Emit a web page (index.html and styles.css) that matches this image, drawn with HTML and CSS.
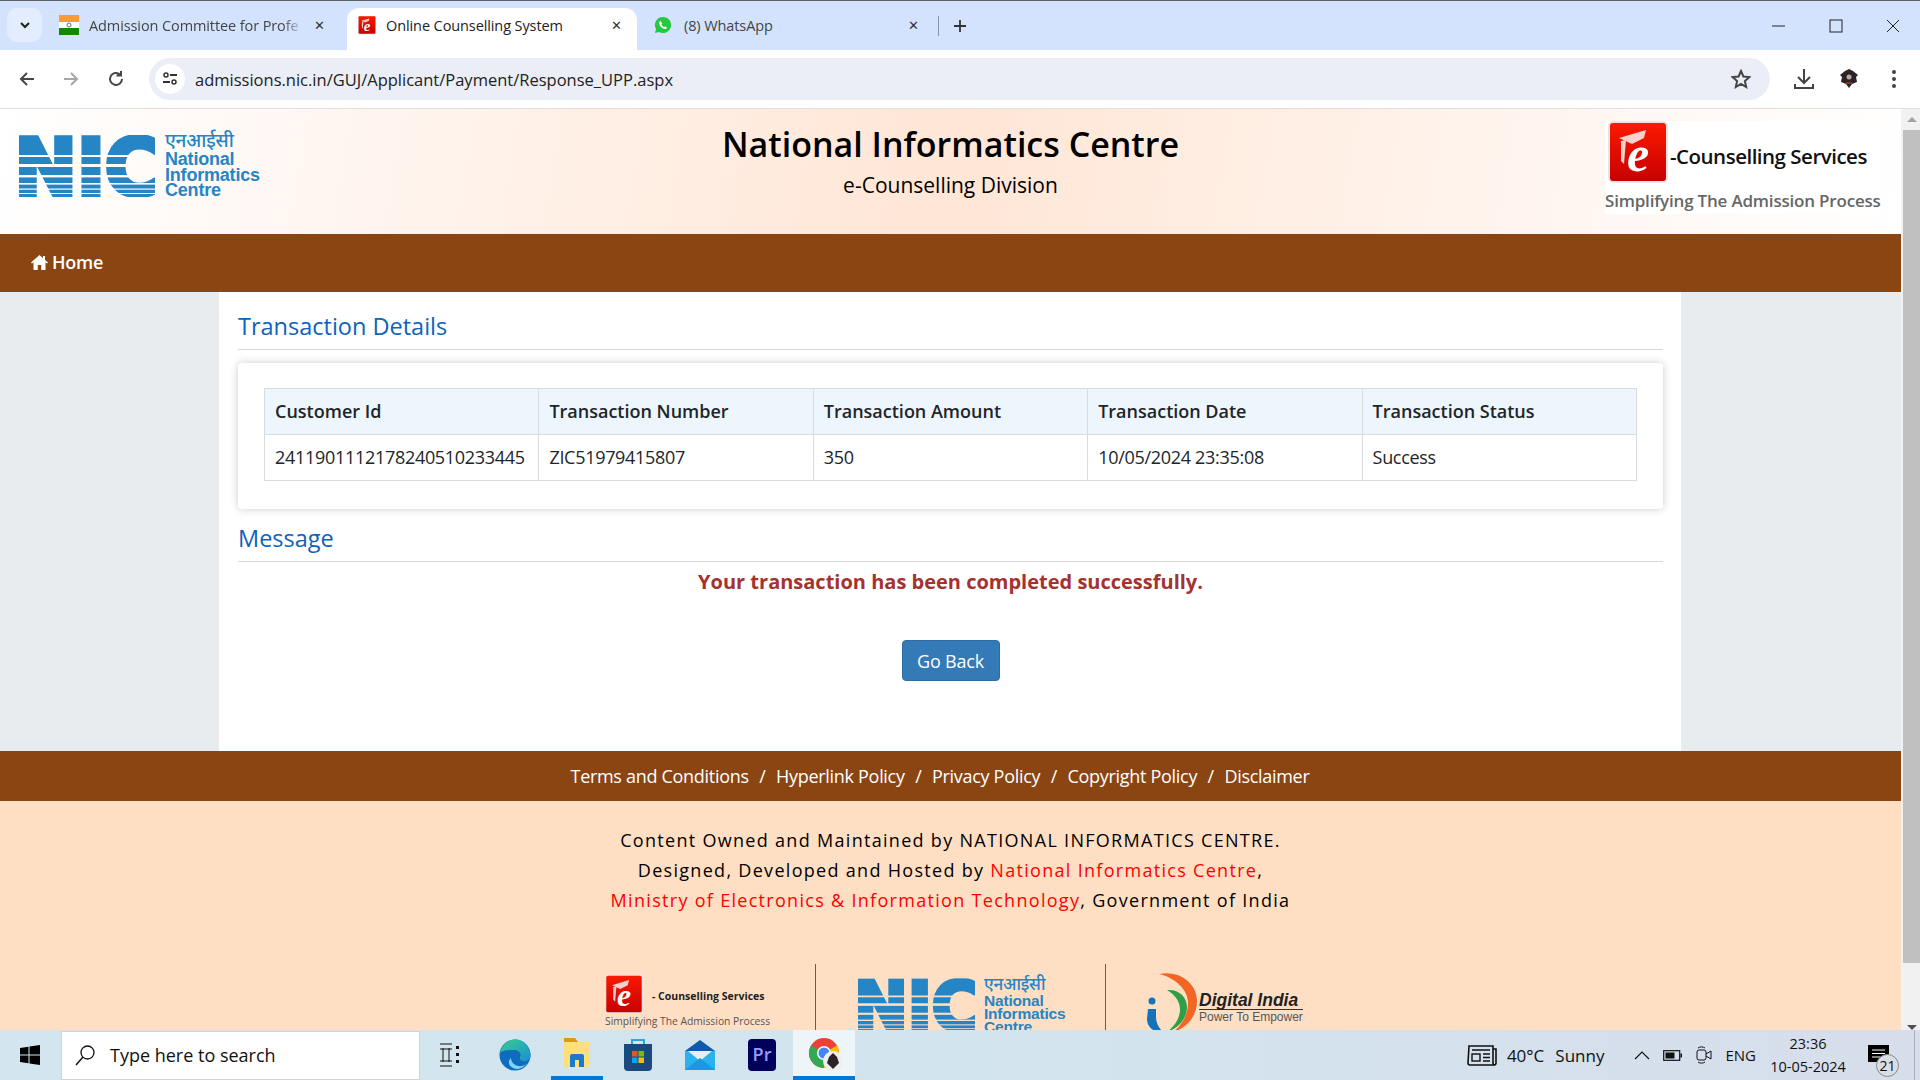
FILE: index.html
```html
<!DOCTYPE html>
<html lang="en">

<head>
    <meta charset="UTF-8">
    <title>Online Counselling System</title>
    <link rel="stylesheet" href="styles.css">
</head>

<body>

    <svg class="defs" width="0" height="0">
        <defs>
            <mask id="nic-stripes">
                <rect x="0" y="0" width="136" height="62" fill="#fff"/>
                <rect x="0" y="20" width="136" height="2" fill="#000"/>
                <rect x="0" y="29" width="136" height="3" fill="#000"/>
                <rect x="0" y="40" width="136" height="2.4" fill="#000"/>
                <rect x="0" y="48" width="136" height="1.6" fill="#000"/>
                <rect x="0" y="53.5" width="136" height="1.2" fill="#000"/>
                <rect x="0" y="58" width="136" height="1" fill="#000"/>
            </mask>
            <symbol id="nic-mark" viewBox="0 0 136 62">
                <g mask="url(#nic-stripes)">
                    <text x="-5" y="60" font-family="DejaVu Sans" font-weight="700" font-size="78" textLength="146" lengthAdjust="spacingAndGlyphs" fill="#2585c5" stroke="#2585c5" stroke-width="5">NIC</text>
                </g>
            </symbol>
            <symbol id="e-icon" viewBox="0 0 60 62">
                <defs>
                    <linearGradient id="red-box" x1="0" y1="0" x2="0" y2="1">
                        <stop offset="0" stop-color="#fb1a00"/>
                        <stop offset="1" stop-color="#c80000"/>
                    </linearGradient>
                </defs>
                <rect x="0" y="0" width="60" height="62" rx="5" fill="#e9e4e4"/>
                <rect x="2" y="2" width="56" height="58" rx="3" fill="url(#red-box)"/>
                <polygon points="11,17 38,9 36,17 24,23" fill="#f8d0cc"/>
                <path d="M13 20v20l3 3 2-24z" fill="#f8d0cc"/>
                <text x="19" y="50" font-family="Liberation Serif" font-style="italic" font-weight="700" font-size="50" fill="#fff">e</text>
            </symbol>
        </defs>
    </svg>

    <div class="tabstrip">
        <div class="tab-search">
            <svg width="14" height="14" viewBox="0 0 14 14"><path d="M3 5l4 4 4-4" fill="none" stroke="#1f1f1f" stroke-width="2"/></svg>
        </div>
        <div class="tab">
            <svg class="fav-flag" width="20" height="20" viewBox="0 0 20 20">
                <rect width="20" height="7" fill="#ff9933"/>
                <rect y="7" width="20" height="6" fill="#fff"/>
                <rect y="13" width="20" height="7" fill="#138808"/>
                <circle cx="10" cy="10" r="2" fill="none" stroke="#667" stroke-width="1"/>
            </svg>
            <span class="tab-title tab-fade">Admission Committee for Profe</span>
            <span class="tab-close">&#10005;</span>
        </div>
        <div class="tab tab-active">
            <svg width="18" height="20" viewBox="0 0 60 62"><use href="#e-icon"/></svg>
            <span class="tab-title">Online Counselling System</span>
            <span class="tab-close">&#10005;</span>
        </div>
        <div class="tab tab-wa">
            <svg width="18" height="20" viewBox="0 0 20 20">
                <path d="M10 1a9 9 0 0 0-7.700 13.600L1 19l4.500-1.200A9 9 0 1 0 10 1z" fill="#25c940"/>
                <path d="M7 5.500c-1 .6-1.500 1.700-1.200 3 .6 2.500 3 5 5.700 5.800 1.300.3 2.500-.2 3-1.300l-2.200-1.500-1 .9c-1.300-.5-2.500-1.700-3-3l.9-1z" fill="#fff"/>
            </svg>
            <span class="tab-title">(8) WhatsApp</span>
            <span class="tab-close">&#10005;</span>
        </div>
        <span class="tab-sep"></span>
        <svg class="tab-plus" width="14" height="14" viewBox="0 0 14 14"><path d="M7 1v12M1 7h12" stroke="#333" stroke-width="1.800"/></svg>
        <div class="win-btns">
            <svg width="14" height="14" viewBox="0 0 14 14"><path d="M0 7h13" stroke="#222" stroke-width="1"/></svg>
            <svg width="14" height="14" viewBox="0 0 14 14"><rect x="1" y="1" width="12" height="12" fill="none" stroke="#222" stroke-width="1"/></svg>
            <svg width="14" height="14" viewBox="0 0 14 14"><path d="M1 1l12 12M13 1L1 13" stroke="#222" stroke-width="1"/></svg>
        </div>
    </div>

    <div class="toolbar">
        <svg class="tool-back" width="18" height="18" viewBox="0 0 18 18"><path d="M16 9H3M9 3L3 9l6 6" fill="none" stroke="#474747" stroke-width="2"/></svg>
        <svg class="tool-fwd" width="18" height="18" viewBox="0 0 18 18"><path d="M2 9h13M9 3l6 6-6 6" fill="none" stroke="#a6a6a6" stroke-width="2"/></svg>
        <svg class="tool-reload" width="18" height="18" viewBox="0 0 18 18"><path d="M15 9a6 6 0 1 1-2-4.500M14 1v4.500H9.500" fill="none" stroke="#474747" stroke-width="2"/></svg>
        <div class="addressbar">
            <span class="site-info">
                <svg width="16" height="14" viewBox="0 0 16 14"><circle cx="4" cy="3" r="2" fill="none" stroke="#333" stroke-width="1.500"/><path d="M8 3h7M1 10h7" stroke="#333" stroke-width="1.800"/><circle cx="12" cy="10" r="2" fill="none" stroke="#333" stroke-width="1.500"/></svg>
            </span>
            <span class="url">admissions.nic.in/GUJ/Applicant/Payment/Response_UPP.aspx</span>
            <svg class="star" width="20" height="20" viewBox="0 0 20 20"><path d="M10 2l2.400 5.500 6 .6-4.500 4 1.300 5.900L10 15l-5.200 3 1.300-5.900-4.500-4 6-.6z" fill="none" stroke="#444" stroke-width="2"/></svg>
        </div>
        <svg class="tool-dl" width="22" height="22" viewBox="0 0 22 22"><path d="M11 1v13M5 9l6 6 6-6M2 16v4h18v-4" fill="none" stroke="#444" stroke-width="2"/></svg>
        <svg class="tool-ext" width="20" height="20" viewBox="0 0 20 20"><path d="M10 0l4 2 5 4-2 2 1 5-5 2-3 4-3-4-5-2 1-5-2-2 5-4z" fill="#2c2327"/><circle cx="10" cy="8" r="2.500" fill="#b9a9a0"/><path d="M7 14h6" stroke="#a33" stroke-width="1.500"/></svg>
        <svg class="tool-menu" width="6" height="20" viewBox="0 0 6 20"><circle cx="3" cy="3" r="2" fill="#444"/><circle cx="3" cy="10" r="2" fill="#444"/><circle cx="3" cy="17" r="2" fill="#444"/></svg>
    </div>

    <div class="viewport">
        <div class="page">
            <header class="site-head">
                <div class="head-left">
                    <div class="nic-logo">
                        <svg class="nic-mark" width="136" height="62"><use href="#nic-mark" width="136" height="62"/></svg>
                        <div class="nic-words">
                            <div class="nic-hi">एनआईसी</div>
                            <div>National<br>Informatics<br>Centre</div>
                        </div>
                    </div>
                </div>
                <div class="head-title">
                    <h1>National Informatics Centre</h1>
                    <div class="head-sub">e-Counselling Division</div>
                </div>
                <div class="head-right">
                    <div class="ec-logo">
                        <div class="ec-row">
                            <svg width="60" height="62" viewBox="0 0 60 62"><use href="#e-icon"/></svg>
                            <span class="ec-name">-Counselling Services</span>
                        </div>
                        <div class="ec-tag">Simplifying The Admission Process</div>
                    </div>
                </div>
            </header>

            <nav class="main-nav">
                <a class="nav-home">
                    <svg width="17" height="15" viewBox="0 0 17 15"><path d="M8.500 0L0 7.500l1 1 1.500-1.300V15h4.300v-5h3.400v5h4.300V7.200L16 8.500l1-1-3-2.600V1h-2v2.200z" fill="#fff"/></svg>
                    Home
                </a>
            </nav>

            <main class="main-bg">
                <div class="container">
                    <h2 class="section-title">Transaction Details</h2>
                    <div class="card">
                        <table class="tx-table">
                            <thead>
                                <tr>
                                    <th>Customer Id</th>
                                    <th>Transaction Number</th>
                                    <th>Transaction Amount</th>
                                    <th>Transaction Date</th>
                                    <th>Transaction Status</th>
                                </tr>
                            </thead>
                            <tbody>
                                <tr>
                                    <td>2411901112178240510233445</td>
                                    <td>ZIC51979415807</td>
                                    <td>350</td>
                                    <td>10/05/2024 23:35:08</td>
                                    <td>Success</td>
                                </tr>
                            </tbody>
                        </table>
                    </div>
                    <h2 class="section-title msg-title">Message</h2>
                    <p class="success">Your transaction has been completed successfully.</p>
                    <div class="btn-wrap"><button class="go-back">Go Back</button></div>
                </div>
            </main>

            <div class="foot-links">
                <a>Terms and Conditions</a><span>/</span>
                <a>Hyperlink Policy</a><span>/</span>
                <a>Privacy Policy</a><span>/</span>
                <a>Copyright Policy</a><span>/</span>
                <a>Disclaimer</a>
            </div>

            <footer class="site-foot">
                <p>Content Owned and Maintained by NATIONAL INFORMATICS CENTRE.</p>
                <p>Designed, Developed and Hosted by <a>National Informatics Centre</a>,</p>
                <p><a>Ministry of Electronics &amp; Information Technology</a>, Government of India</p>
                <div class="foot-logos">
                    <div class="fl-ec">
                        <div class="fl-ec-row">
                            <svg width="38" height="40" viewBox="0 0 60 62"><use href="#e-icon"/></svg>
                            <span>- Counselling Services</span>
                        </div>
                        <div class="fl-ec-tag">Simplifying The Admission Process</div>
                    </div>
                    <div class="fl-nic">
                        <svg class="fl-mark" width="117" height="56"><use href="#nic-mark" width="117" height="56"/></svg>
                        <div class="fl-words">
                            <div class="fl-hi">एनआईसी</div>
                            <div>National<br>Informatics<br>Centre</div>
                        </div>
                    </div>
                    <div class="fl-di">
                        <svg width="52" height="60" viewBox="0 0 52 60">
                            <path d="M14 1C34-3 52 10 52 28c0 14-9 27-24 31 9-7 15-17 15-29C43 17 31 5 14 1z" fill="#f26522"/>
                            <path d="M22 17c12-1 20 7 20 17 0 11-8 21-20 25 8-6 13-14 13-23 0-8-6-15-13-19z" fill="#2e9e47"/>
                            <path d="M3 36h8v8c0 6 3 11 7 15C9 60 2 54 2 46z" fill="#1573b9"/>
                            <circle cx="7" cy="28" r="3.500" fill="#1573b9"/>
                        </svg>
                        <div class="fl-di-text">
                            <div class="fl-di-name">Digital India</div>
                            <div class="fl-di-tag">Power To Empower</div>
                        </div>
                    </div>
                </div>
            </footer>
        </div>

        <div class="scrollbar">
            <div class="sb-up"></div>
            <div class="sb-thumb"></div>
            <div class="sb-down"></div>
        </div>
    </div>

    <div class="taskbar">
        <svg class="start" width="20" height="20" viewBox="0 0 20 20"><path d="M0 3l8.500-1.300V9.500H0zM9.500 1.500L20 0v9.500H9.500zM0 10.500h8.500v7.800L0 17zM9.500 10.500H20V20L9.500 18.500z" fill="#000"/></svg>
        <div class="search-box">
            <svg width="22" height="22" viewBox="0 0 22 22"><circle cx="13.500" cy="8.500" r="6.500" fill="none" stroke="#111" stroke-width="1.300"/><path d="M9 13l-7 8" stroke="#111" stroke-width="1.500"/></svg>
            <span>Type here to search</span>
        </div>
        <svg class="tb-view" width="22" height="24" viewBox="0 0 22 24"><path d="M1 1h12M1 23h12M4 5v14M10 5v14M1 6h12M1 18h12" stroke="#111" stroke-width="1" fill="none"/><rect x="17" y="3" width="3" height="3" fill="#111"/><rect x="17" y="10" width="3" height="3" fill="#111"/><rect x="17" y="17" width="3" height="3" fill="#111"/></svg>
        <div class="tb-icons">
            <div class="tb-icon">
                <svg width="32" height="32" viewBox="0 0 32 32">
                    <defs><linearGradient id="edge-a" x1="0" y1="0" x2="1" y2="1"><stop offset="0" stop-color="#35d08a"/><stop offset="1" stop-color="#1a8fd8"/></linearGradient></defs>
                    <circle cx="16" cy="16" r="15.500" fill="#0f6cbd"/>
                    <path d="M1 14C3 5 10 .5 16 .5 25 .5 31.500 8 31.500 17c0 4-4 6-8 5-3-.8-3-3-2-5 .8-3-2-6-6-6-6 0-12 0-14.500 3z" fill="url(#edge-a)"/>
                    <path d="M12 19c0 5 5 9 11 8 2-.3 4-1.500 5-3-3 5-9 7-13 5.500-5-1.800-7-7-3-10.500z" fill="#7ed4f2"/>
                </svg>
            </div>
            <div class="tb-icon tb-open tb-files">
                <svg width="28" height="32" viewBox="0 0 28 32">
                    <path d="M1 1h11l3 4H1z" fill="#d79a1d"/>
                    <rect x="1" y="5" width="26" height="25" rx="1" fill="#fde07a"/>
                    <path d="M7 30V19a2 2 0 0 1 2-2h10a2 2 0 0 1 2 2v11h-5v-7h-4v7z" fill="#1b79c9"/>
                </svg>
            </div>
            <div class="tb-icon">
                <svg width="30" height="34" viewBox="0 0 30 34">
                    <path d="M9 6V2h12v4" fill="none" stroke="#28a8e0" stroke-width="2"/>
                    <path d="M1 6h28v23a4 4 0 0 1-4 4H5a4 4 0 0 1-4-4z" fill="#1a4a80"/>
                    <rect x="9" y="13" width="5.500" height="5.500" fill="#f25022"/>
                    <rect x="15.500" y="13" width="5.500" height="5.500" fill="#7fba00"/>
                    <rect x="9" y="19.500" width="5.500" height="5.500" fill="#00a4ef"/>
                    <rect x="15.500" y="19.500" width="5.500" height="5.500" fill="#ffb900"/>
                </svg>
            </div>
            <div class="tb-icon">
                <svg width="32" height="32" viewBox="0 0 32 32">
                    <path d="M1 12L16 1l15 11v19H1z" fill="#0b5cab"/>
                    <path d="M1 12h30v19H1z" fill="#29b2ee"/>
                    <path d="M4 12h24l-12 10z" fill="#e9eef2"/>
                    <path d="M1 31L16 19l15 12z" fill="#1c98de"/>
                </svg>
            </div>
            <div class="tb-icon">
                <div class="premiere">Pr</div>
            </div>
            <div class="tb-icon tb-open tb-active">
                <div class="chrome-wrap">
                    <svg width="32" height="32" viewBox="0 0 32 32">
                        <circle cx="16" cy="16" r="15" fill="#ea4335"/>
                        <path d="M16 16L29 8.500A15 15 0 0 1 16 31z" fill="#fbbc04"/>
                        <path d="M16 16L16 31A15 15 0 0 1 3 8.500z" fill="#34a853"/>
                        <circle cx="16" cy="16" r="7" fill="#fff"/>
                        <circle cx="16" cy="16" r="5.500" fill="#4285f4"/>
                    </svg>
                    <svg class="chrome-badge" width="20" height="22" viewBox="0 0 20 22"><circle cx="10" cy="11" r="10" fill="#eee"/><path d="M10 3l4 4 2 6-4 4-2 2-2-2-4-4 2-6z" fill="#2c2327"/></svg>
                </div>
            </div>
        </div>
        <div class="tray">
            <svg class="tray-news" width="30" height="21" viewBox="0 0 30 21"><path d="M2 1h24v17a2 2 0 0 0 2 2H3a2 2 0 0 1-2-2z" fill="none" stroke="#111" stroke-width="1.600"/><path d="M26 4h3v14a2 2 0 0 1-2 2" fill="none" stroke="#111" stroke-width="1.600"/><rect x="5" y="9" width="8" height="7" fill="none" stroke="#111" stroke-width="1.400"/><path d="M5 5h18M16 9h7M16 12.500h7M16 16h7" stroke="#111" stroke-width="1.400"/></svg>
            <span class="tray-temp">40°C</span>
            <span class="tray-sky">Sunny</span>
            <svg class="tray-chev" width="16" height="10" viewBox="0 0 16 10"><path d="M1 9l7-7 7 7" fill="none" stroke="#111" stroke-width="1.200"/></svg>
            <svg class="tray-batt" width="19" height="11" viewBox="0 0 19 11"><rect x=".7" y=".7" width="16" height="9.600" fill="none" stroke="#111" stroke-width="1.200"/><rect x="2.500" y="2.500" width="9" height="6" fill="#111"/><rect x="17.500" y="3.500" width="1.500" height="4" fill="#111"/></svg>
            <svg class="tray-cam" width="16" height="18" viewBox="0 0 16 18"><rect x="1" y="4" width="9" height="10" rx="2" fill="none" stroke="#111" stroke-width="1"/><path d="M10 8l5-3v8l-5-3M2 2c2-1.500 5-1.500 7 0M2 16c2 1.500 5 1.500 7 0" fill="none" stroke="#111" stroke-width="1"/></svg>
            <span class="tray-lang">ENG</span>
            <div class="tray-clock">
                <div>23:36</div>
                <div>10-05-2024</div>
            </div>
            <div class="tray-note">
                <svg width="21" height="18" viewBox="0 0 21 18"><rect width="21" height="17" fill="#000"/><path d="M4 5h13M4 8.500h13M4 12h8" stroke="#fff" stroke-width="1"/></svg>
                <span class="note-badge">21</span>
            </div>
        </div>
        <div class="tb-peek"></div>
    </div>

</body>

</html>
```

FILE: styles.css
```css
* {
    box-sizing: border-box;
}

html,
body {
    margin: 0;
    height: 100%;
    overflow: hidden;
}

body {
    width: 1920px;
    height: 1080px;
    display: flex;
    flex-direction: column;
    font-family: "Open Sans", sans-serif;
    color: #000;
}

.defs {
    position: absolute;
}

/* browser chrome */

.tabstrip {
    height: 50px;
    flex: none;
    display: flex;
    align-items: flex-end;
    background: #d3e3fd;
    border-top: 1px solid #5f6368;
    padding-left: 7px;
    font-size: 14.500px;
    color: #444;
}

.tab-search {
    width: 35px;
    height: 34px;
    margin: 0 9px 8px 0;
    background: #e4edfd;
    border-radius: 10px;
    display: flex;
    align-items: center;
    justify-content: center;
}

.tab {
    width: 296px;
    height: 42px;
    padding: 0 22px 8px 8px;
    display: flex;
    align-items: center;
    gap: 10px;
}

.tab svg {
    flex: none;
}

.tab-title {
    flex: 1;
    white-space: nowrap;
    overflow: hidden;
    letter-spacing: -0.1px;
}

.tab-fade {
    -webkit-mask-image: linear-gradient(to right, #000 90%, transparent);
    mask-image: linear-gradient(to right, #000 90%, transparent);
}

.tab-close {
    font-size: 13px;
    color: #333;
    font-family: "DejaVu Sans", sans-serif;
}

.tab-active {
    width: 290px;
    background: #fff;
    border-radius: 12px 12px 0 0;
    color: #222;
    padding: 0 15px 8px 11px;
}

.tab-wa {
    width: 301px;
    padding: 0 19px 8px 17px;
}

.tab-wa .tab-title {
    margin-left: 2px;
}

.tab-sep {
    width: 1px;
    height: 20px;
    background: #8a95a8;
    margin-bottom: 14px;
}

.tab-plus {
    margin: 0 0 17px 14px;
}

.win-btns {
    margin-left: auto;
    display: flex;
    gap: 43px;
    padding: 0 20px 17px 0;
}

.toolbar {
    height: 59px;
    flex: none;
    display: flex;
    align-items: center;
    background: #fff;
    border-bottom: 1px solid #e0e0e0;
    border-radius: 10px 10px 0 0;
}

.tool-back {
    margin-left: 18px;
}

.tool-fwd {
    margin-left: 26px;
}

.tool-reload {
    margin-left: 27px;
}

.addressbar {
    width: 1621px;
    height: 42px;
    margin-left: 24px;
    background: #ebeef7;
    border-radius: 21px;
    display: flex;
    align-items: center;
    padding: 0 14px 0 6px;
}

.site-info {
    width: 30px;
    height: 30px;
    background: #fff;
    border-radius: 50%;
    display: flex;
    align-items: center;
    justify-content: center;
}

.url {
    margin-left: 10px;
    font-size: 16.500px;
    color: #222;
}

.star {
    margin-left: auto;
    margin-right: 5px;
}

.tool-dl {
    margin-left: 23px;
}

.tool-ext {
    margin-left: 24px;
}

.tool-menu {
    margin-left: 32px;
}

/* page */

.viewport {
    height: 921px;
    flex: none;
    display: flex;
    overflow: hidden;
}

.page {
    width: 1901px;
    flex: none;
    display: flex;
    flex-direction: column;
}

.site-head {
    height: 125px;
    flex: none;
    display: grid;
    grid-template-columns: 1fr auto 1fr;
    background: linear-gradient(100deg, #fff 0%, #ffe6d6 50%, #fff 100%);
}

.head-left {
    padding: 20px 0 0 19px;
}

.nic-logo {
    display: flex;
    align-items: flex-start;
    gap: 10px;
}

.nic-mark {
    margin-top: 6px;
}

.nic-words {
    color: #2585c5;
    font-family: "Liberation Sans", sans-serif;
    font-weight: 700;
    font-size: 18px;
    line-height: 15.500px;
    letter-spacing: -0.2px;
}

.nic-hi {
    font-family: "Noto Sans", sans-serif;
    font-size: 19px;
    font-weight: 500;
    line-height: 23px;
}

.head-title {
    text-align: center;
    padding-top: 11px;
}

h1 {
    margin: 0;
    font-size: 34px;
    font-weight: 600;
    line-height: 48px;
}

.head-sub {
    font-size: 21px;
    font-weight: 500;
    line-height: 30px;
    margin-top: 2px;
}

.head-right {
    display: flex;
    justify-content: flex-end;
    padding: 12px 20px 0 0;
}

.ec-logo {
    width: 276px;
    height: 93px;
    background: #fff;
}

.ec-row {
    display: flex;
    align-items: center;
    padding-left: 3px;
}

.ec-name {
    font-size: 20.500px;
    font-weight: 600;
    letter-spacing: -0.5px;
    margin: 8px 0 0 2px;
    color: #111;
}

.ec-tag {
    font-size: 17px;
    font-weight: 600;
    color: #666;
    white-space: nowrap;
    letter-spacing: -0.2px;
    line-height: 26px;
    margin-top: 5px;
}

.main-nav {
    height: 58px;
    flex: none;
    background: #8b4513;
    display: flex;
    align-items: center;
    padding: 0 0 2px 31px;
}

.nav-home {
    display: flex;
    align-items: center;
    gap: 4px;
    font-size: 18px;
    font-weight: 600;
    letter-spacing: -0.2px;
    color: #fff;
}

.main-bg {
    height: 459px;
    flex: none;
    background: #e9ecef;
    display: flex;
    justify-content: center;
    padding-right: 1px;
}

.container {
    width: 1462px;
    background: #fff;
    padding: 0 18px 0 19px;
}

.section-title {
    margin: 0;
    height: 58px;
    padding-top: 17px;
    font-size: 23.500px;
    font-weight: 500;
    line-height: 34px;
    color: #0e62bc;
    border-bottom: 1px solid #d8d8d8;
}

.card {
    height: 146px;
    margin-top: 13px;
    padding: 25px 26px 0;
    background: #fff;
    border-radius: 4px;
    box-shadow: 0 0 8px rgba(0, 0, 0, 0.2);
}

.tx-table {
    width: 100%;
    table-layout: fixed;
    border-collapse: collapse;
    font-size: 18px;
    color: #212529;
}

.tx-table th,
.tx-table td {
    height: 46px;
    padding: 0 10px 2px;
    border: 1px solid #d8dbe0;
    text-align: left;
    white-space: nowrap;
    overflow: hidden;
}

.tx-table th {
    background: #eef6fd;
    font-weight: 600;
}

.tx-table td {
    letter-spacing: -0.3px;
}

.msg-title {
    height: 53px;
    padding-top: 12px;
}

.success {
    margin: 0;
    padding-top: 5px;
    text-align: center;
    font-size: 20px;
    font-weight: 700;
    line-height: 30px;
    color: #a5322e;
}

.btn-wrap {
    display: flex;
    justify-content: center;
    padding-top: 43px;
}

.go-back {
    width: 98px;
    height: 41px;
    border: 1px solid #2e6da4;
    border-radius: 4px;
    background: #337ab7;
    color: #fff;
    font-family: "Open Sans", sans-serif;
    font-size: 18px;
    letter-spacing: -0.2px;
}

.foot-links {
    height: 50px;
    flex: none;
    background: #8b4513;
    color: #fff;
    font-size: 18px;
    letter-spacing: -0.3px;
    display: flex;
    align-items: center;
    justify-content: center;
    gap: 10.500px;
    padding-right: 21px;
}

.site-foot {
    flex: 1;
    background: #ffdfc4;
    text-align: center;
    padding-top: 24px;
    font-size: 18px;
    letter-spacing: 1.300px;
    color: #000;
    font-weight: 500;
}

.site-foot p {
    margin: 0;
    line-height: 30px;
}

.site-foot a {
    color: #f00;
}

.foot-logos {
    margin-top: 49px;
    height: 90px;
    display: flex;
    letter-spacing: 0;
    text-align: left;
    padding-left: 603px;
}

.fl-ec {
    width: 212px;
    padding-top: 10px;
    height: 90px;
}

.fl-ec-row {
    display: flex;
    align-items: center;
    gap: 9px;
    font-size: 10.500px;
    font-weight: 700;
    color: #222;
    padding-left: 2px;
}

.fl-ec-row span {
    margin-top: 4px;
}

.fl-ec-tag {
    font-size: 10.300px;
    color: #555;
    line-height: 15px;
    padding-left: 2px;
}

.fl-nic {
    width: 291px;
    height: 90px;
    border-left: 1px solid #1573b9;
    border-right: 1px solid #1573b9;
    padding: 12px 0 0 42px;
    display: flex;
    gap: 9px;
}

.fl-words {
    color: #2585c5;
    font-family: "Liberation Sans", sans-serif;
    font-weight: 700;
    font-size: 15.500px;
    line-height: 13px;
    letter-spacing: -0.2px;
    margin-top: -2px;
}

.fl-hi {
    font-family: "Noto Sans", sans-serif;
    font-size: 17px;
    font-weight: 500;
    line-height: 20px;
}

.fl-mark {
    margin-top: 1px;
}

.fl-di {
    padding: 9px 0 0 39px;
    display: flex;
    gap: 2px;
}

.fl-di-text {
    padding-top: 18px;
    font-family: "Liberation Sans", sans-serif;
}

.fl-di-name {
    font-size: 17.500px;
    font-weight: 700;
    font-style: italic;
    line-height: 18px;
    color: #222;
    border-bottom: 1px solid #333;
}

.fl-di-tag {
    font-size: 12px;
    line-height: 14px;
    color: #555;
}

.scrollbar {
    flex: 1;
    display: flex;
    flex-direction: column;
    align-items: flex-end;
    background: #f1f1f1;
    padding-top: 8px;
}

.sb-up {
    width: 0;
    height: 0;
    margin: 0 3px 8px;
    border: 5px solid transparent;
    border-top: 0;
    border-bottom: 5px solid #a3a3a3;
}

.sb-thumb {
    width: 17px;
    height: 836px;
    background: #c0c0c0;
}

.sb-down {
    width: 0;
    height: 0;
    margin: 62px 3px 0;
    border: 5px solid transparent;
    border-bottom: 0;
    border-top: 5px solid #505050;
}

/* windows taskbar */

.taskbar {
    height: 50px;
    flex: none;
    display: flex;
    align-items: center;
    background: linear-gradient(to right, #d3e6f0, #d2e4ee 50%, #d7deeb);
    color: #111;
}

.start {
    margin-left: 20px;
    flex: none;
}

.search-box {
    width: 359px;
    height: 49px;
    margin-left: 21px;
    flex: none;
    background: #fff;
    border: 1px solid #cfd4d8;
    display: flex;
    align-items: center;
    padding-left: 12px;
    gap: 14px;
    font-size: 18px;
}

.tb-view {
    margin-left: 19px;
    flex: none;
}

.tb-icons {
    display: flex;
    margin-left: 23px;
    align-self: stretch;
}

.tb-icon {
    width: 62px;
    display: flex;
    align-items: center;
    justify-content: center;
}

.tb-open {
    border-bottom: 4px solid #0078d4;
}

.tb-files {
    width: 52px;
    margin: 0 4px 0 5px;
}

.tb-active {
    background: #eef5f8;
}

.premiere {
    width: 28px;
    height: 32px;
    border-radius: 4px;
    background: #00005b;
    color: #9999ff;
    font-weight: 600;
    font-size: 18px;
    text-align: center;
    line-height: 30px;
}

.chrome-wrap {
    position: relative;
    width: 32px;
    height: 32px;
}

.chrome-badge {
    position: absolute;
    right: -3px;
    bottom: -3px;
}

.tray {
    margin-left: auto;
    display: flex;
    align-items: center;
    padding-right: 14px;
}

.tray-temp {
    margin-left: 10px;
    font-size: 17px;
}

.tray-sky {
    margin-left: 11px;
    font-size: 17px;
}

.tray-chev {
    margin-left: 30px;
}

.tray-batt {
    margin-left: 13px;
}

.tray-cam {
    margin-left: 14px;
}

.tray-lang {
    margin-left: 13px;
    font-size: 15px;
}

.tray-clock {
    margin-left: 7px;
    width: 90px;
    text-align: center;
    font-size: 14.500px;
    line-height: 23px;
}

.tray-note {
    position: relative;
    margin-left: 15px;
    width: 32px;
    height: 40px;
    padding-top: 10px;
}

.note-badge {
    position: absolute;
    left: 8px;
    top: 19px;
    width: 23px;
    height: 23px;
    border-radius: 50%;
    border: 1px solid #888;
    background: #d8dde6;
    font-size: 14px;
    line-height: 21px;
    text-align: center;
}

.tb-peek {
    width: 6px;
    align-self: stretch;
    border-left: 1px solid #a9b0bb;
}
```
